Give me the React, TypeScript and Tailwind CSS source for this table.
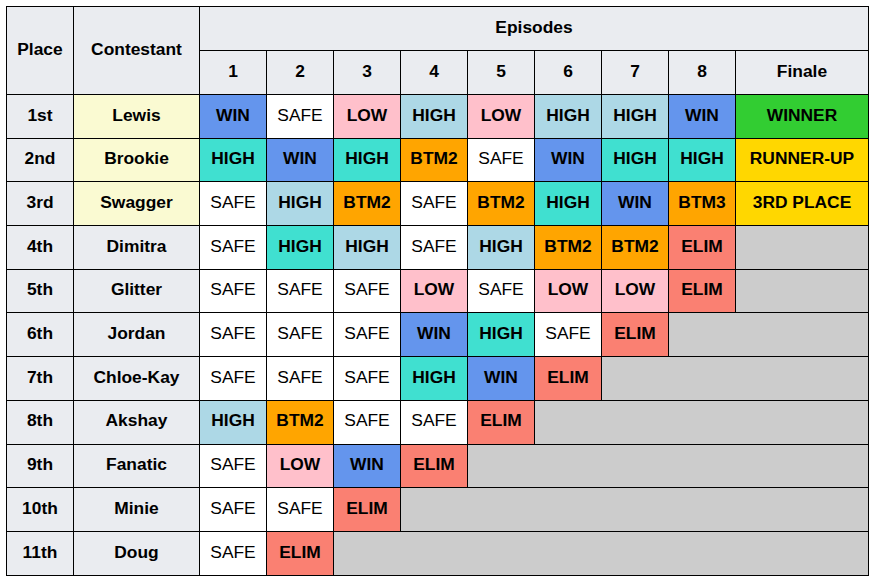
import React from "react";

type Cell = { t: string; c?: string; span?: number };

// result colours
const bg: Record<string, string> = {
  WIN: "bg-[#6495ed] font-bold",
  HIGH: "bg-[#add8e6] font-bold",
  TOP: "bg-[#40e0d0] font-bold",
  SAFE: "bg-white",
  LOW: "bg-[#ffc0cb] font-bold",
  BTM2: "bg-[#ffa500] font-bold",
  BTM3: "bg-[#ffa500] font-bold",
  ELIM: "bg-[#fa8072] font-bold",
  WINNER: "bg-[#32cd32] font-bold",
  "RUNNER-UP": "bg-[#ffd700] font-bold",
  "3RD PLACE": "bg-[#ffd700] font-bold",
  NONE: "bg-[#cccccc]",
};

const c = (t: string): Cell => ({ t, c: t });
const hi = (): Cell => ({ t: "HIGH", c: "TOP" });
const none = (span: number): Cell => ({ t: "", c: "NONE", span });

const rows: { place: string; name: string; top?: boolean; cells: Cell[] }[] = [
  {
    place: "1st", name: "Lewis", top: true,
    cells: [c("WIN"), c("SAFE"), c("LOW"), c("HIGH"), c("LOW"), c("HIGH"), c("HIGH"), c("WIN"), c("WINNER")],
  },
  {
    place: "2nd", name: "Brookie", top: true,
    cells: [hi(), c("WIN"), hi(), c("BTM2"), c("SAFE"), c("WIN"), hi(), hi(), c("RUNNER-UP")],
  },
  {
    place: "3rd", name: "Swagger", top: true,
    cells: [c("SAFE"), c("HIGH"), c("BTM2"), c("SAFE"), c("BTM2"), hi(), c("WIN"), c("BTM3"), c("3RD PLACE")],
  },
  {
    place: "4th", name: "Dimitra",
    cells: [c("SAFE"), hi(), c("HIGH"), c("SAFE"), c("HIGH"), c("BTM2"), c("BTM2"), c("ELIM"), none(1)],
  },
  {
    place: "5th", name: "Glitter",
    cells: [c("SAFE"), c("SAFE"), c("SAFE"), c("LOW"), c("SAFE"), c("LOW"), c("LOW"), c("ELIM"), none(1)],
  },
  {
    place: "6th", name: "Jordan",
    cells: [c("SAFE"), c("SAFE"), c("SAFE"), c("WIN"), hi(), c("SAFE"), c("ELIM"), none(2)],
  },
  {
    place: "7th", name: "Chloe-Kay",
    cells: [c("SAFE"), c("SAFE"), c("SAFE"), hi(), c("WIN"), c("ELIM"), none(3)],
  },
  {
    place: "8th", name: "Akshay",
    cells: [c("HIGH"), c("BTM2"), c("SAFE"), c("SAFE"), c("ELIM"), none(4)],
  },
  {
    place: "9th", name: "Fanatic",
    cells: [c("SAFE"), c("LOW"), c("WIN"), c("ELIM"), none(5)],
  },
  {
    place: "10th", name: "Minie",
    cells: [c("SAFE"), c("SAFE"), c("ELIM"), none(6)],
  },
  {
    place: "11th", name: "Doug",
    cells: [c("SAFE"), c("ELIM"), none(7)],
  },
];

const th = "border border-black bg-[#eaecf0] font-bold text-center p-0 pb-[2px]";

export default function App() {
  return (
    <div
      className="bg-white p-[6px] text-black text-[17.4px] leading-none"
      style={{ fontFamily: '"Liberation Sans", Arial, sans-serif' }}
    >
      <table className="table-fixed border-collapse w-[863px]">
        <colgroup>
          <col className="w-[67px]" />
          <col className="w-[126px]" />
          {[1, 2, 3, 4, 5, 6, 7, 8].map((n) => (
            <col key={n} className="w-[67px]" />
          ))}
          <col />
        </colgroup>
        <thead>
          <tr className="h-[44px]">
            <th rowSpan={2} className={th}>Place</th>
            <th rowSpan={2} className={th}>Contestant</th>
            <th colSpan={9} className={th}>Episodes</th>
          </tr>
          <tr className="h-[44px]">
            {["1", "2", "3", "4", "5", "6", "7", "8", "Finale"].map((e) => (
              <th key={e} className={th}>{e}</th>
            ))}
          </tr>
        </thead>
        <tbody>
          {rows.map((r) => (
            <tr key={r.place} className="h-[43.7px]">
              <td className={th}>{r.place}</td>
              <td className={`${th} ${r.top ? "bg-[#fafad2]" : ""}`}>{r.name}</td>
              {r.cells.map((x, i) => (
                <td
                  key={i}
                  colSpan={x.span}
                  className={`border border-black text-center p-0 pb-[2px] ${bg[x.c ?? "SAFE"]}`}
                >
                  {x.t}
                </td>
              ))}
            </tr>
          ))}
        </tbody>
      </table>
    </div>
  );
}
